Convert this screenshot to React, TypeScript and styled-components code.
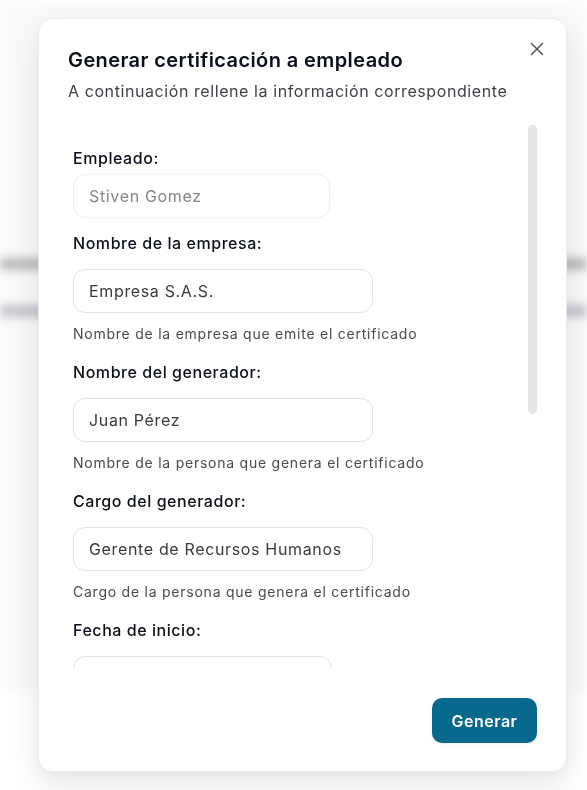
import React from 'react';
import styled, { createGlobalStyle } from 'styled-components';

const GlobalStyle = createGlobalStyle`
  * { box-sizing: border-box; }
  html, body { margin: 0; padding: 0; background: #ffffff; }
  body {
    font-family: Inter, "Noto Sans", "Liberation Sans", sans-serif;
    overflow: hidden;
  }
`;

// blurred page behind the dialog
const Backdrop = styled.div`
  height: 790px;
  filter: blur(5px);
`;

const BackdropCard = styled.div`
  height: 692px;
  background: #fafafa;
  padding-top: 240px;
`;

const BackdropRow = styled.div`
  height: 47px;
  display: flex;
  align-items: center;
`;

const BackdropBar = styled.div<{ $tone: string }>`
  width: 100%;
  height: 12px;
  background: ${(p) => p.$tone};
`;

const Overlay = styled.div`
  position: fixed;
  inset: 0;
  display: flex;
  align-items: flex-start;
  padding: 18px 20px 18px 38px;
`;

const Dialog = styled.div`
  position: relative;
  width: 529px;
  height: 754px;
  background: #ffffff;
  border: 1px solid #ececec;
  border-radius: 14px;
  box-shadow: 0 12px 32px rgba(0, 0, 0, 0.1), 0 2px 6px rgba(0, 0, 0, 0.04);
  padding: 27px 29px 28px 29px;
  display: flex;
  flex-direction: column;
`;

const CloseButton = styled.button`
  all: unset;
  position: absolute;
  top: 18px;
  right: 17px;
  width: 24px;
  height: 24px;
  display: flex;
  align-items: center;
  justify-content: center;
  color: #52525b;
  cursor: pointer;
`;

const Title = styled.h2`
  margin: 0;
  font-size: 20px;
  line-height: 28px;
  font-weight: 600;
  color: #0b0f1a;
  letter-spacing: 0.4px;
`;

const Subtitle = styled.p`
  margin: 5px 0 0;
  font-size: 16px;
  line-height: 24px;
  color: #3f3f46;
  letter-spacing: 0.58px;
`;

const ScrollArea = styled.div`
  margin-top: 18px;
  flex: 1;
  min-height: 0;
  display: flex;
  gap: 14px;
`;

const Viewport = styled.div`
  flex: 1;
  overflow: hidden;
  padding: 27px 0 0 5px;
`;

const ScrollTrack = styled.div`
  width: 9px;
  padding-top: 4px;
`;

const ScrollThumb = styled.div`
  height: 289px;
  border-radius: 5px;
  background: #e6e6e6;
`;

const Form = styled.div`
  display: flex;
  flex-direction: column;
  gap: 15px;
`;

const Field = styled.div`
  display: flex;
  flex-direction: column;
`;

const Label = styled.label<{ $tight?: boolean }>`
  font-size: 16px;
  line-height: 20px;
  font-weight: 500;
  color: #0b0f1a;
  letter-spacing: 0.55px;
  margin-bottom: ${(p) => (p.$tight ? '6px' : '16px')};
`;

const Input = styled.div<{ $width: number; $disabled?: boolean }>`
  width: ${(p) => p.$width}px;
  height: 44px;
  flex-shrink: 0;
  border: 1px solid ${(p) => (p.$disabled ? '#efefef' : '#e3e3e3')};
  border-radius: 12px;
  padding: 0 15px;
  display: flex;
  align-items: center;
  font-size: 16px;
  letter-spacing: 0.65px;
  color: ${(p) => (p.$disabled ? '#85858c' : '#3a3a3a')};
  background: #ffffff;
`;

const Helper = styled.p`
  margin: 11px 0 3px;
  font-size: 14px;
  line-height: 20px;
  color: #4a4a4a;
  letter-spacing: 0.76px;
`;

const Footer = styled.div`
  margin-top: 30px;
  display: flex;
  justify-content: flex-end;
`;

const PrimaryButton = styled.button`
  all: unset;
  width: 105px;
  height: 45px;
  border-radius: 10px;
  background: #07698e;
  color: #ffffff;
  font-size: 16px;
  font-weight: 600;
  letter-spacing: 0.5px;
  display: flex;
  align-items: center;
  justify-content: center;
  box-shadow: 0 1px 2px rgba(0, 0, 0, 0.08);
  cursor: pointer;
`;

const fields = [
  {
    label: 'Nombre de la empresa:',
    value: 'Empresa S.A.S.',
    help: 'Nombre de la empresa que emite el certificado',
    width: 300,
  },
  {
    label: 'Nombre del generador:',
    value: 'Juan Pérez',
    help: 'Nombre de la persona que genera el certificado',
    width: 300,
  },
  {
    label: 'Cargo del generador:',
    value: 'Gerente de Recursos Humanos',
    help: 'Cargo de la persona que genera el certificado',
    width: 300,
  },
  { label: 'Fecha de inicio:', value: '', help: '', width: 259 },
];

export default function App() {
  return (
    <>
      <GlobalStyle />
      <Backdrop>
        <BackdropCard>
          <BackdropRow>
            <BackdropBar $tone="#b8b8ba" />
          </BackdropRow>
          <BackdropRow>
            <BackdropBar $tone="#c2c2cc" />
          </BackdropRow>
        </BackdropCard>
      </Backdrop>

      <Overlay>
        <Dialog role="dialog">
          <CloseButton aria-label="Cerrar">
            <svg width="14" height="14" viewBox="0 0 14 14" fill="none">
              <path
                d="M1.5 1.5l11 11M12.5 1.5l-11 11"
                stroke="currentColor"
                strokeWidth="1.5"
                strokeLinecap="round"
              />
            </svg>
          </CloseButton>

          <Title>Generar certificación a empleado</Title>
          <Subtitle>A continuación rellene la información correspondiente</Subtitle>

          <ScrollArea>
            <Viewport>
              <Form>
                <Field>
                  <Label $tight>Empleado:</Label>
                  <Input $width={257} $disabled>
                    Stiven Gomez
                  </Input>
                </Field>
                {fields.map((f) => (
                  <Field key={f.label}>
                    <Label>{f.label}</Label>
                    <Input $width={f.width}>{f.value}</Input>
                    {f.help && <Helper>{f.help}</Helper>}
                  </Field>
                ))}
              </Form>
            </Viewport>
            <ScrollTrack>
              <ScrollThumb />
            </ScrollTrack>
          </ScrollArea>

          <Footer>
            <PrimaryButton>Generar</PrimaryButton>
          </Footer>
        </Dialog>
      </Overlay>
    </>
  );
}
